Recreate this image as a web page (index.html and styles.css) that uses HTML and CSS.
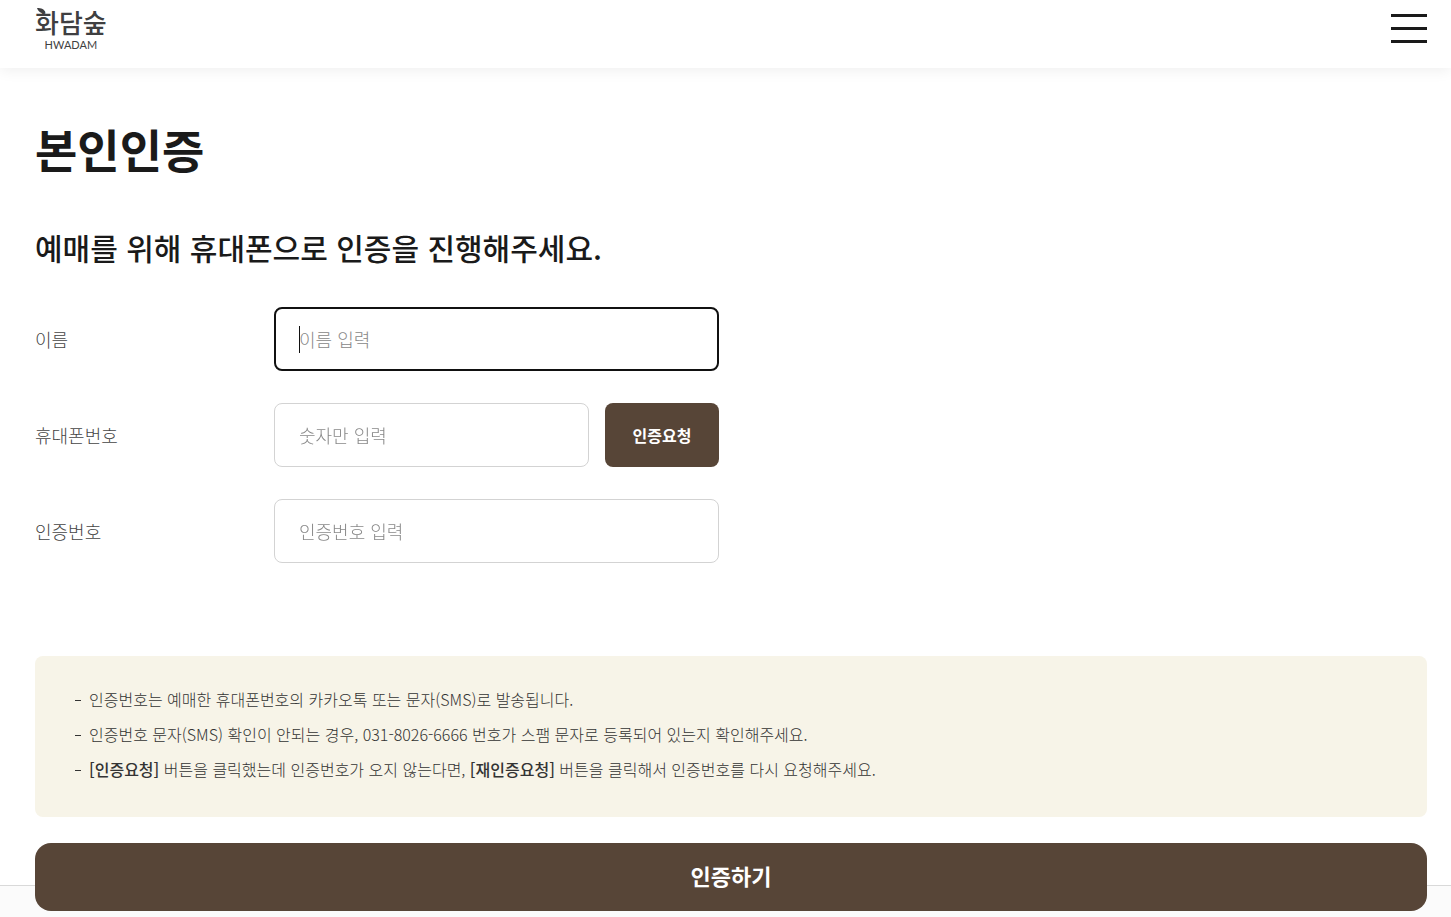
FILE: index.html
```html
<!DOCTYPE html>
<html lang="ko">
<head>
    <meta charset="UTF-8">
    <meta name="viewport" content="width=device-width, initial-scale=1.0">
    <title>본인인증</title>
    <link rel="stylesheet" href="styles.css">
</head>
<body>

<header class="header">
    <a href="#" class="logo">
        <svg class="logo-leaf" width="9" height="6" viewBox="0 0 9 6" aria-hidden="true">
            <path d="M0 0C4 0 8 1 8.500 5.500C5 5.500 1.500 4.500 0 0Z" fill="currentColor"/>
        </svg>
        <span class="logo-ko">화담숲</span>
        <span class="logo-en">HWADAM</span>
    </a>
    <button type="button" class="menu-btn" aria-label="메뉴">
        <span></span>
        <span></span>
        <span></span>
    </button>
</header>

<main class="container">
    <h1>본인인증</h1>
    <h2>예매를 위해 휴대폰으로 인증을 진행해주세요.</h2>

    <form id="certForm" class="cert-form">
        <div class="form-row">
            <label for="userName">이름</label>
            <div class="field-group">
                <input type="text" id="userName" placeholder="이름 입력" autofocus>
            </div>
        </div>
        <div class="form-row">
            <label for="userPhone">휴대폰번호</label>
            <div class="field-group">
                <input type="tel" id="userPhone" placeholder="숫자만 입력">
                <button type="button" class="request-btn">인증요청</button>
            </div>
        </div>
        <div class="form-row">
            <label for="certNumber">인증번호</label>
            <div class="field-group">
                <input type="text" id="certNumber" placeholder="인증번호 입력">
            </div>
        </div>
    </form>

    <ul class="notice">
        <li>인증번호는 예매한 휴대폰번호의 카카오톡 또는 문자(SMS)로 발송됩니다.</li>
        <li>인증번호 문자(SMS) 확인이 안되는 경우, 031-8026-6666 번호가 스팸 문자로 등록되어 있는지 확인해주세요.</li>
        <li><strong>[인증요청]</strong> 버튼을 클릭했는데 인증번호가 오지 않는다면, <strong>[재인증요청]</strong> 버튼을 클릭해서 인증번호를 다시 요청해주세요.</li>
    </ul>
</main>

<footer class="footer"></footer>

<!-- stays at the bottom, over the footer -->
<div class="bottom-bar">
    <button type="submit" form="certForm" class="submit-btn">인증하기</button>
</div>

</body>
</html>
```
FILE: styles.css
```css
* {
    box-sizing: border-box;
}

body {
    display: flex;
    flex-direction: column;
    min-height: 100vh;
    margin: 0;
    font-family: "Noto Sans CJK KR", sans-serif;
    font-weight: 300;
    color: #1a1a1a;
    background-color: #fff;
}

input, button {
    font-family: inherit;
}

.header {
    display: flex;
    justify-content: space-between;
    align-items: flex-start;
    height: 68px;
    padding: 6px 24px 0 35px;
    box-shadow: 0 2px 14px rgba(0, 0, 0, 0.07);
}

.logo {
    position: relative;
    display: flex;
    flex-direction: column;
    align-items: center;
    color: #3f3f41;
    text-decoration: none;
}

.logo-leaf {
    position: absolute;
    top: 2px;
    left: 2px;
}

.logo-ko {
    font-size: 26px;
    font-weight: 500;
    line-height: 32px;
}

.logo-en {
    font-family: Lato, sans-serif;
    font-size: 11px;
    font-weight: 400;
    line-height: 13px;
}

.menu-btn {
    display: flex;
    flex-direction: column;
    gap: 10px;
    width: 36px;
    padding: 8px 0;
    border: none;
    background: none;
    cursor: pointer;
}

.menu-btn span {
    width: 100%;
    height: 3px;
    background-color: #1a1a1a;
}

.container {
    padding: 45px 24px 68px 35px;
}

h1 {
    margin: 0 0 42px;
    font-size: 46px;
    font-weight: 700;
    line-height: 70px;
}

h2 {
    margin: 0 0 38px;
    font-size: 30px;
    font-weight: 500;
    line-height: 44px;
}

.cert-form {
    display: flex;
    flex-direction: column;
    gap: 32px;
    max-width: 684px;
}

.form-row {
    display: grid;
    grid-template-columns: 239px 1fr;
    align-items: center;
}

.form-row label {
    font-size: 18px;
    color: #444;
}

.field-group {
    position: relative;
    display: flex;
    gap: 16px;
}

.field-group input {
    flex: 1;
    min-width: 0;
    height: 64px;
    padding: 0 24px;
    border: 1px solid #d3d3d3;
    border-radius: 8px;
    font-size: 18px;
    font-weight: 300;
    background-color: #fff;
}

.field-group input::placeholder {
    color: #888;
}

.field-group input:focus {
    padding: 0 23px;
    border: 2px solid #111;
    outline: none;
}

/* taller caret while the field is empty */
.field-group input:focus:placeholder-shown {
    caret-color: transparent;
}

.field-group:has(input:focus:placeholder-shown)::after {
    content: "";
    position: absolute;
    top: 19px;
    left: 25px;
    width: 1px;
    height: 27px;
    background-color: #111;
}

.request-btn {
    flex: 0 0 114px;
    height: 64px;
    padding: 0;
    border: none;
    border-radius: 8px;
    font-size: 16px;
    font-weight: 700;
    color: #fff;
    background-color: #574537;
    cursor: pointer;
}

.notice {
    margin: 93px 0 0;
    padding: 26px 40px 30px;
    border-radius: 8px;
    list-style: none;
    font-size: 16px;
    line-height: 35px;
    color: #333;
    background-color: #f7f4e8;
}

.notice li {
    position: relative;
    padding-left: 14px;
}

.notice li::before {
    content: "";
    position: absolute;
    top: 18px;
    left: 0;
    width: 6px;
    height: 1px;
    background-color: #333;
}

.notice strong {
    font-weight: 500;
}

.footer {
    flex: 1;
    border-top: 1px solid #d9d9d9;
    background-color: #fbfbfb;
}

.bottom-bar {
    position: fixed;
    right: 0;
    bottom: 6px;
    left: 0;
    padding: 0 24px 0 35px;
}

.submit-btn {
    display: block;
    width: 100%;
    height: 68px;
    padding: 0 0 4px;
    border: none;
    border-radius: 16px;
    font-size: 22px;
    font-weight: 700;
    color: #fff;
    background-color: #574537;
    cursor: pointer;
}
```
